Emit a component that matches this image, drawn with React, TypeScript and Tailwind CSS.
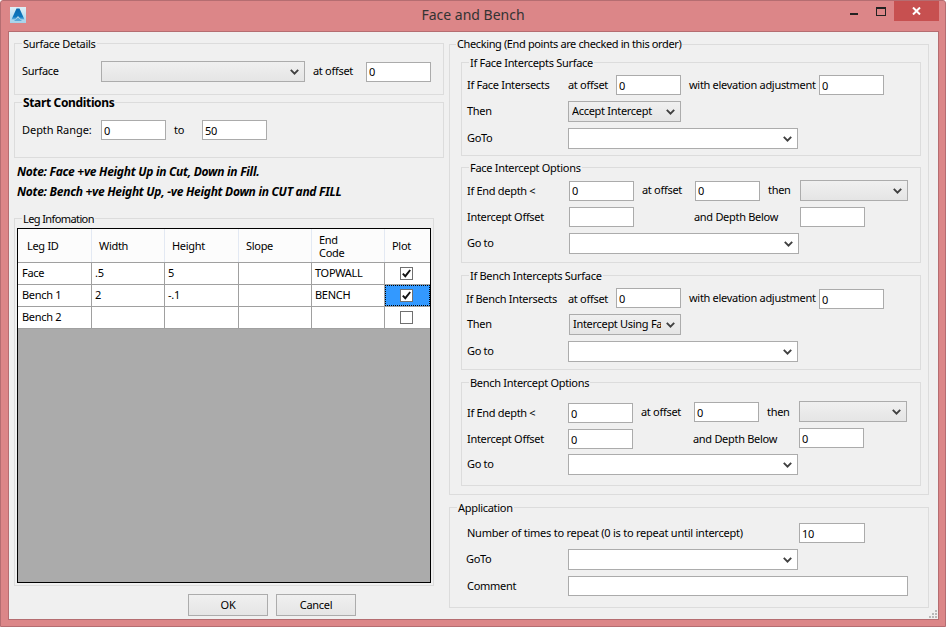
import type { ReactNode } from 'react';
import clsx from 'clsx';

function Chevron() {
  return (
    <svg width="9" height="6" viewBox="0 0 9 6" className="shrink-0">
      <path d="M0.8 0.8 L4.5 4.6 L8.2 0.8" fill="none" stroke="#404040" strokeWidth="1.9" />
    </svg>
  );
}

function Box({ label, bold, className, legendClass, children }: { label: string; bold?: boolean; className?: string; legendClass?: string; children: ReactNode }) {
  return (
    <div className={clsx('relative border border-[#dcdcdc]', className)}>
      <span
        className={clsx(
          'absolute bg-[#f0f0f0] px-[1px] leading-[16px] whitespace-nowrap',
          bold && 'text-[12px] font-bold tracking-[-0.35px]',
          legendClass ?? 'left-[7px] top-[-8px]',
        )}
      >
        {label}
      </span>
      {children}
    </div>
  );
}

function Field({ value = '', className }: { value?: string; className?: string }) {
  return (
    <input
      readOnly
      value={value}
      className={clsx('h-[20px] w-[65px] shrink-0 border border-[#ababab] bg-white px-[2px] outline-none', className)}
    />
  );
}

function Combo({ value, white, className }: { value?: string; white?: boolean; className?: string }) {
  return (
    <div
      className={clsx(
        'flex h-[21px] shrink-0 items-center justify-between border border-[#acacac] pl-[3px] pr-[5px]',
        white ? 'bg-white' : 'bg-gradient-to-b from-[#f0f0f0] to-[#e5e5e5]',
        className,
      )}
    >
      <span className="w-[88px] overflow-hidden whitespace-nowrap">{value}</span>
      <Chevron />
    </div>
  );
}

function Row({ className, children }: { className?: string; children: ReactNode }) {
  return <div className={clsx('flex items-center', className)}>{children}</div>;
}

function Check({ checked }: { checked?: boolean }) {
  return (
    <div className="flex h-[13px] w-[13px] items-center justify-center border border-[#707070] bg-white">
      {checked && (
        <svg width="9" height="9" viewBox="0 0 9 9">
          <path d="M0.8 4.6 L3.3 7.2 L8.2 1" fill="none" stroke="#111" strokeWidth="1.9" />
        </svg>
      )}
    </div>
  );
}

const columns = ['w-[74px]', 'w-[73px]', 'w-[74px]', 'w-[73px]', 'w-[73px]'];

function HeaderCell({ className, children }: { className?: string; children: ReactNode }) {
  return (
    <div className={clsx('flex h-full items-center border-r border-[#e3e9f3] pl-[7px] leading-[13px]', className)}>
      <span className="block">{children}</span>
    </div>
  );
}

function LegRow({ cells, checked, selected }: { cells: string[]; checked?: boolean; selected?: boolean }) {
  return (
    <div className="flex h-[22px] border-b border-[#a0a0a0] bg-white">
      {cells.map((c, i) => (
        <div key={i} className={clsx('flex items-center border-r border-[#a0a0a0] pl-[3px]', columns[i], i === 0 && 'pl-[4px]')}>
          {c}
        </div>
      ))}
      <div
        className={clsx(
          'flex w-[45px] items-center justify-center pr-[2px]',
          selected && 'border border-dotted border-black bg-[#3399ff]',
        )}
      >
        <Check checked={checked} />
      </div>
    </div>
  );
}

function LegGrid() {
  return (
    <div className="ml-[2px] mt-[9px] h-[355px] w-[414px] border border-black bg-[#ababab]">
      <div className="flex h-[34px] border-b border-[#a0a0a0] bg-[#fcfcfc]">
        <HeaderCell className="w-[74px] pl-[9px]">Leg ID</HeaderCell>
        <HeaderCell className="w-[73px]">Width</HeaderCell>
        <HeaderCell className="w-[74px]">Height</HeaderCell>
        <HeaderCell className="w-[73px]">Slope</HeaderCell>
        <HeaderCell className="w-[73px]">
          End
          <br />
          Code
        </HeaderCell>
        <HeaderCell className="w-[45px] border-r-0">Plot</HeaderCell>
      </div>
      <LegRow cells={['Face', '.5', '5', '', 'TOPWALL']} checked />
      <LegRow cells={['Bench 1', '2', '-.1', '', 'BENCH']} checked selected />
      <LegRow cells={['Bench 2', '', '', '', '']} />
    </div>
  );
}

function PushButton({ children }: { children: ReactNode }) {
  return (
    <div className="flex h-[22px] w-[80px] items-center justify-center border border-[#acacac] bg-gradient-to-b from-[#f0f0f0] to-[#e5e5e5]">
      {children}
    </div>
  );
}

function LeftColumn() {
  return (
    <div className="w-[430px] shrink-0">
      <Box label="Surface Details" className="h-[52px]">
        <Row className="pl-[7px] pt-[17px]">
          <span className="w-[79px]">Surface</span>
          <Combo className="w-[204px]" />
          <span className="w-[61px] pl-[8px]">at offset</span>
          <Field value="0" className="border-[#7eb4ea]" />
        </Row>
      </Box>
      <Box label="Start Conditions" bold className="mt-[7px] h-[56px]">
        <Row className="pl-[7px] pt-[17px]">
          <span className="w-[79px] tracking-[-0.05px]">Depth Range:</span>
          <Field value="0" />
          <span className="w-[36px] pl-[8px]">to</span>
          <Field value="50" />
        </Row>
      </Box>
      <div className="mt-[4px] pl-[3px] text-[12px] font-bold italic leading-[20px] tracking-[-0.28px]">
        <p>Note: Face +ve Height Up in Cut, Down in Fill.</p>
        <p>Note: Bench +ve Height Up, -ve Height Down in CUT and FILL</p>
      </div>
      <Box label="Leg Infomation" className="mt-[16px] h-[368px] w-[420px]" legendClass="left-[7px] top-[-8px] tracking-[-0.6px]">
        <LegGrid />
      </Box>
      <div className="ml-[174px] mt-[8px] flex gap-[8px]">
        <PushButton>OK</PushButton>
        <PushButton>Cancel</PushButton>
      </div>
    </div>
  );
}

function RightColumn() {
  return (
    <div className="mt-[1px] w-[480px] shrink-0">
      <Box label="Checking (End points are checked in this order)" className="h-[451px]" legendClass="left-[6px] top-[-9px] tracking-[-0.38px]">
        <div className="ml-[11px] w-[460px] pt-[17px]">
          <Box label="If Face Intercepts Surface" className="h-[94px]">
            <Row className="pl-[5px] pt-[12px]">
              <span className="w-[101px]">If Face Intersects</span>
              <span className="w-[48px]">at offset</span>
              <Field value="0" />
              <span className="w-[138px] whitespace-nowrap pl-[8px]">with elevation adjustment</span>
              <Field value="0" />
            </Row>
            <Row className="mt-[6px] pl-[5px]">
              <span className="w-[101px]">Then</span>
              <Combo value="Accept Intercept" className="w-[113px]" />
            </Row>
            <Row className="mt-[6px] pl-[5px]">
              <span className="w-[101px]">GoTo</span>
              <Combo white className="w-[230px]" />
            </Row>
          </Box>

          <Box label="Face Intercept Options" className="mt-[11px] h-[96px]">
            <Row className="pl-[5px] pt-[12px]">
              <span className="w-[102px] pt-[2px]">If End depth &lt;</span>
              <Field value="0" />
              <span className="w-[61px] pl-[8px]">at offset</span>
              <Field value="0" />
              <span className="w-[40px] pl-[8px]">then</span>
              <Combo className="w-[108px]" />
            </Row>
            <Row className="mt-[6px] pl-[5px]">
              <span className="w-[102px]">Intercept Offset</span>
              <Field />
              <span className="w-[166px] pl-[60px]">and Depth Below</span>
              <Field />
            </Row>
            <Row className="mt-[6px] pl-[5px]">
              <span className="w-[102px]">Go to</span>
              <Combo white className="w-[230px]" />
            </Row>
          </Box>

          <Box label="If Bench Intercepts Surface" className="mt-[12px] h-[95px]">
            <Row className="items-start pl-[4px] pt-[12px]">
              <span className="w-[102px] whitespace-nowrap pt-[3px]">If Bench Intersects</span>
              <span className="w-[48px] pt-[3px]">at offset</span>
              <Field value="0" />
              <span className="w-[138px] whitespace-nowrap pl-[8px] pt-[2px]">with elevation adjustment</span>
              <Field value="0" className="mt-[1px]" />
            </Row>
            <Row className="mt-[5px] pl-[5px]">
              <span className="w-[102px]">Then</span>
              <Combo value="Intercept Using Face" className="w-[112px]" />
            </Row>
            <Row className="mt-[6px] pl-[5px]">
              <span className="w-[101px]">Go to</span>
              <Combo white className="w-[230px]" />
            </Row>
          </Box>

          <Box label="Bench Intercept Options" className="mt-[12px] h-[104px]">
            <Row className="items-start pl-[5px] pt-[18px]">
              <span className="w-[101px] pt-[4px]">If End depth &lt;</span>
              <Field value="0" className="mt-[2px]" />
              <span className="w-[61px] pl-[8px] pt-[3px]">at offset</span>
              <Field value="0" className="mt-[1px]" />
              <span className="w-[40px] pl-[8px] pt-[3px]">then</span>
              <Combo className="w-[108px]" />
            </Row>
            <Row className="mt-[5px] items-start pl-[5px]">
              <span className="w-[101px] pt-[3px]">Intercept Offset</span>
              <Field value="0" className="mt-[1px]" />
              <span className="w-[166px] pl-[60px] pt-[3px]">and Depth Below</span>
              <Field value="0" />
            </Row>
            <Row className="mt-[5px] pl-[5px]">
              <span className="w-[101px]">Go to</span>
              <Combo white className="w-[230px]" />
            </Row>
          </Box>
        </div>
      </Box>

      <Box label="Application" className="mt-[12px] h-[101px]">
        <Row className="pl-[17px] pt-[15px]">
          <span className="w-[332px] whitespace-nowrap tracking-[-0.24px]">Number of times to repeat (0 is to repeat until intercept)</span>
          <Field value="10" className="w-[66px]" />
        </Row>
        <Row className="mt-[6px] pl-[16px]">
          <span className="w-[102px]">GoTo</span>
          <Combo white className="w-[230px]" />
        </Row>
        <Row className="mt-[6px] pl-[17px]">
          <span className="w-[101px]">Comment</span>
          <Field className="w-[340px]" />
        </Row>
      </Box>
    </div>
  );
}

function TitleBar() {
  return (
    <div className="grid h-[30px] grid-cols-[1fr_auto_1fr]">
      <div className="pl-[9px] pt-[6px]">
        <svg width="16" height="16" viewBox="0 0 16 16">
          <defs>
            <linearGradient id="tile" x1="0" y1="0" x2="0" y2="1">
              <stop offset="0" stopColor="#dff0f8" />
              <stop offset="1" stopColor="#a5d2ea" />
            </linearGradient>
            <linearGradient id="mark" x1="0" y1="0" x2="0" y2="1">
              <stop offset="0" stopColor="#0a68ad" />
              <stop offset="0.75" stopColor="#0f78bf" />
              <stop offset="1" stopColor="#6fb6e0" />
            </linearGradient>
          </defs>
          <rect width="16" height="16" fill="url(#tile)" />
          <path d="M6.5 1.5 H9.5 L14.5 12.5 H11 L8 9 L5 12.5 H1.5 Z" fill="url(#mark)" />
          <path d="M4 14 H12 L8 10.5 Z" fill="#5aa8d8" />
        </svg>
      </div>
      <div className="pt-[4px] font-['Open_Sans',sans-serif] text-[14px] leading-[20px] tracking-normal text-[#333]">Face and Bench</div>
      <div className="flex items-start justify-end pr-[6px]">
        <div className="mt-[12px] h-[2px] w-[8px] bg-[#222]" />
        <div className="ml-[18px] mt-[6px] h-[9px] w-[10px] border border-t-2 border-[#222]" />
        <div className="ml-[8px] flex h-[20px] w-[45px] items-center justify-center bg-[#c75050]">
          <svg width="9" height="8" viewBox="0 0 9 8">
            <path d="M1 0.5 L8 7.5 M8 0.5 L1 7.5" stroke="#fff" strokeWidth="2" />
          </svg>
        </div>
      </div>
    </div>
  );
}

export default function App() {
  return (
    <div className="h-[628px] w-[947px] overflow-hidden">
      <div className="flex h-[627px] w-[946px] flex-col rounded-t-[3px] border border-[#b56d71] bg-[#dc8688] font-['Liberation_Sans',sans-serif] text-[11px] tracking-[-0.3px] text-black">
        <TitleBar />
        <div className="relative ml-[7px] flex h-[589px] w-[931px] gap-[5px] border border-[#b56d71] bg-[#f0f0f0] pl-[5px] pt-[11px]">
          <LeftColumn />
          <RightColumn />
          <svg width="8" height="8" viewBox="0 0 8 8" className="absolute bottom-[1px] right-[1px]">
            <path d="M6 0h2v2H6zM3 3h2v2H3zM6 3h2v2H6zM0 6h2v2H0zM3 6h2v2H3zM6 6h2v2H6z" fill="#b8b8b8" />
          </svg>
        </div>
      </div>
    </div>
  );
}
